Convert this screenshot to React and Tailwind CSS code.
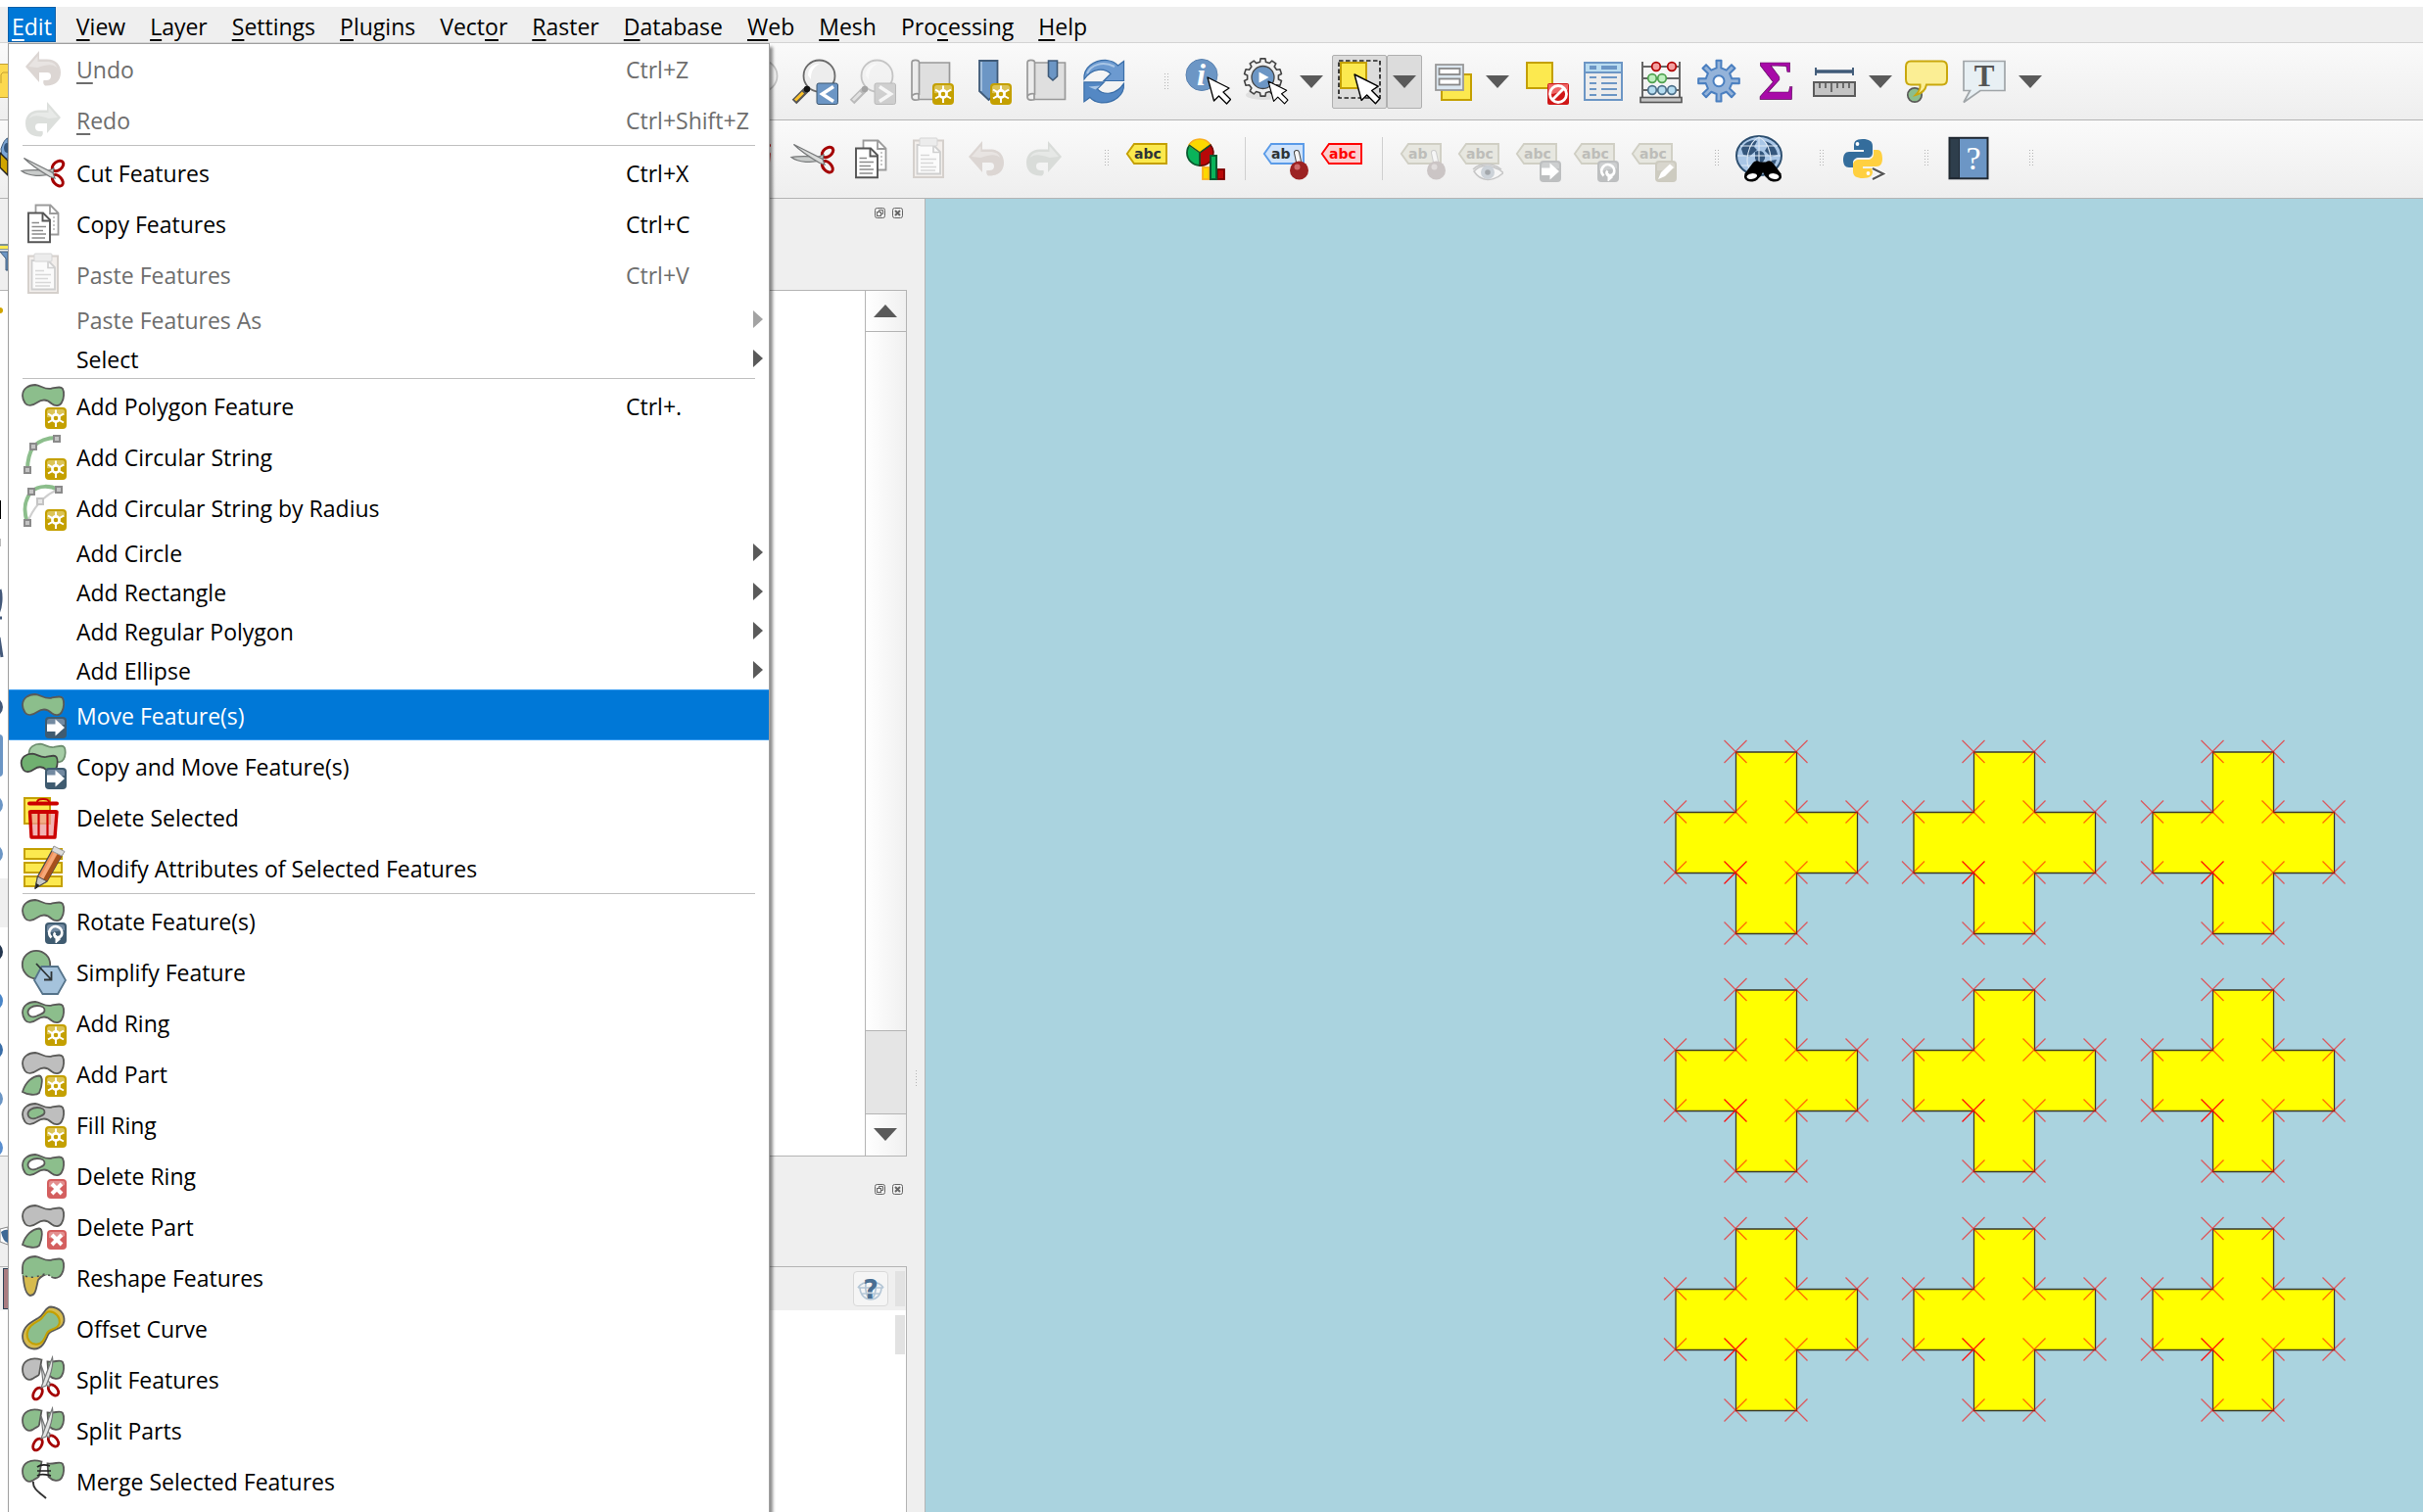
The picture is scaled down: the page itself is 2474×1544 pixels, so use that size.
import React from "react";

/* ---------- small drawing helpers ---------- */

const BLOB =
  "M3 14C3 7 9 3 16 3C22 3.5 25 8 32 6.8C38 5.6 42 4 44 7C45.6 10 45.6 17 43 21C41 25 36 25 32.5 22C28 17.5 23 17.5 18 21C13 24.5 8 25 5.5 21.5C3.5 18.5 3 17 3 14Z";

function Svg({ children, className = "" }) {
  return (
    <svg viewBox="0 0 48 48" className={"size-12 shrink-0 " + className} fill="none" aria-hidden="true">
      {children}
    </svg>
  );
}

function gearPath(cx, cy, outer, inner, teeth, width) {
  const points = [];
  for (let i = 0; i < teeth; i++) {
    const a = (i * 2 * Math.PI) / teeth - Math.PI / 2;
    const w = (width * Math.PI) / teeth;
    [[inner, -w * 1.25], [outer, -w * 0.85], [outer, w * 0.85], [inner, w * 1.25]].forEach(([r, d]) => {
      points.push(`${(cx + r * Math.cos(a + d)).toFixed(2)} ${(cy + r * Math.sin(a + d)).toFixed(2)}`);
    });
  }
  return "M" + points.join("L") + "Z";
}

function Blob({ fill = "#8cbe8c" }) {
  return <path d={BLOB} fill={fill} stroke="#5a5a58" strokeWidth="1.8" />;
}

function NewBadge() {
  return (
    <g>
      <rect x="26" y="26" width="22" height="22" rx="4" fill="#c4a000" />
      <path d="M28 36V30.500a2.500 2.500 0 0 1 2.500-2.500h13a2.500 2.500 0 0 1 2.500 2.500V34C40 34 34 37 28 36Z" fill="#dcc456" />
      <g stroke="#fff" strokeWidth="2">
        <path d="M37 28.500V33M37 41V46M29 32.500L33.800 35.400M40.200 38.800L45 41.500M29 41.500L33.800 38.800M40.200 35.400L45 32.500" />
        <circle cx="37" cy="37" r="3.600" strokeWidth="2.600" fill="#c4a000" />
      </g>
    </g>
  );
}

function ToolBadge({ children, base = "#3f5b70", shine = "#7289a0" }) {
  return (
    <g>
      <rect x="26" y="26" width="22" height="22" rx="4" fill={base} />
      <path d="M28 36V30.500a2.500 2.500 0 0 1 2.500-2.500h13a2.500 2.500 0 0 1 2.500 2.500V34C40 34 34 37 28 36Z" fill={shine} />
      {children}
    </g>
  );
}

function ArrowBadge({ base, shine }) {
  return (
    <ToolBadge base={base} shine={shine}>
      <path d="M28 33.500H36.500V28.500L46 37L36.500 45.500V41H28Z" fill="#fff" />
    </ToolBadge>
  );
}

function RotateBadge({ base, shine }) {
  return (
    <ToolBadge base={base} shine={shine}>
      <path d="M32.500 41.500A6.500 6.500 0 1 1 43 38.500C42 41 40 41.500 38 41.500C35.500 41 34.500 38 36.500 36.500" stroke="#fff" strokeWidth="2.800" />
      <path d="M37 39L41.500 43L37 47Z" fill="#fff" stroke="#fff" />
    </ToolBadge>
  );
}

function DeleteBadge() {
  return (
    <g>
      <rect x="28" y="28" width="20" height="20" rx="4" fill="#d45f5f" />
      <path d="M30 36V32a2 2 0 0 1 2-2h12a2 2 0 0 1 2 2V34Q38 38 30 36Z" fill="#e39090" />
      <path d="M33 33L43 43M43 33L33 43" stroke="#fff" strokeWidth="4" />
    </g>
  );
}

function Pointer({ x = 0, y = 0, scale = 1 }) {
  return (
    <path
      transform={`translate(${x} ${y}) scale(${scale})`}
      d="M0 0L6.500 24L11.500 19L19.500 27L23.500 22.500L16 15L22 11Z"
      fill="#fff"
      stroke="#000"
      strokeWidth="1.300"
      strokeLinejoin="round"
    />
  );
}

/* ---------- icons ---------- */

const UndoIcon = ({ mirror, fill = "#dcd6d3" }) => (
  <Svg>
    <g transform={mirror ? "translate(48 0) scale(-1 1)" : undefined}>
      <path d="M6 22L20 6V14.500H28C37 14.500 42 20 42 28C42 37 36 42 26 41.500C24 40 24 38 24.500 36C30 36.500 32 35 32 31.500C32 29 30.500 28 28 28H20V38Z" fill={fill} />
      <path d="M9 22L18.500 11V17H28C33 17 37 19 38 23C33 19 28 20 18.500 23Z" fill="#fff" opacity=".35" />
    </g>
  </Svg>
);

const Scissors = () => (
  <g>
    <g fill="none" stroke="#a40000" strokeWidth="3">
      <ellipse cx="39" cy="17.500" rx="6.500" ry="4.200" transform="rotate(-38 39 17.500)" />
      <ellipse cx="38.800" cy="32.200" rx="6.800" ry="4.200" transform="rotate(48 38.800 32.200)" />
    </g>
    <path d="M2 22.500C10 21 24 22 30 22L35 20L34 25C24 29 9 28 2 22.500Z" fill="#c9cccb" stroke="#77797a" strokeWidth="1.200" />
    <path d="M4.500 9.500L34 24.500L36 30L31 28.500C20 22 9 14 4.500 9.500Z" fill="#d9dbda" stroke="#77797a" strokeWidth="1.200" />
  </g>
);

const CutIcon = () => <Svg><Scissors /></Svg>;

const CopyIcon = () => (
  <Svg>
    <path d="M16.500 5.500H31.500L39.500 13.500V35.500H16.500Z" fill="#fff" stroke="#9b9b9b" strokeWidth="1.800" />
    <path d="M31 6V14H39" stroke="#9b9b9b" strokeWidth="1.800" />
    <path d="M34 18H36M34 22H36M34 26H36M34 30H36" stroke="#b5b5b5" strokeWidth="1.500" />
    <path d="M9 13.500H24L31 20.500V43.200H9Z" fill="#fff" stroke="#555" strokeWidth="1.900" />
    <path d="M23.500 14V21.500H31" stroke="#555" strokeWidth="1.900" />
    <path d="M12.500 23.500H20M12.500 27.500H27M12.500 31.500H24M12.500 35H27M12.500 39H26" stroke="#8a8a8a" strokeWidth="1.600" />
  </Svg>
);

const PasteIcon = () => (
  <Svg>
    <rect x="9" y="5.500" width="30" height="37.500" fill="#f3efec" stroke="#d5d0cc" strokeWidth="2" />
    <path d="M12.500 10H29L36 17V39.500H12.500Z" fill="#fbfbfb" stroke="#cfcfcf" strokeWidth="1.800" />
    <path d="M29 10.500V17.500H35.500" stroke="#cfcfcf" strokeWidth="1.600" />
    <rect x="15" y="3" width="18" height="8" rx="1" fill="#ececec" stroke="#d5d5d5" />
    <path d="M16 20.500H25M16 24.500H32M16 28.500H29M16 32.500H32M16 36H31" stroke="#d8d8d8" strokeWidth="1.600" />
  </Svg>
);

const AddPolygonIcon = () => <Svg><Blob /><NewBadge /></Svg>;

const Node = ({ x, y, light }) => (
  <rect x={x - 3} y={y - 3} width="6" height="6" fill={light ? "#e6e6e6" : "#c4c4c4"} stroke={light ? "#c4c4c4" : "#8a8a8a"} strokeWidth="2" />
);

const CircularStringIcon = () => (
  <Svg>
    <path d="M8 38C8 30 9 22 14 14C20 8 29 5 38 5" stroke="#8cbe8c" strokeWidth="4" />
    <Node x={8} y={38} /><Node x={14} y={14} /><Node x={38} y={6} /><NewBadge />
  </Svg>
);

const CircularRadiusIcon = () => (
  <Svg>
    <path d="M8 40C4 28 4 18 12 8C20 1 32 2 39 6" stroke="#8cbe8c" strokeWidth="4" />
    <path d="M8 40C13 26 24 12 39 6" stroke="#cfcfcf" strokeWidth="2" />
    <Node x={8} y={40} /><Node x={12} y={8} /><Node x={21} y={18} light /><Node x={40} y={6} /><NewBadge />
  </Svg>
);

const MoveIcon = () => <Svg><Blob /><ArrowBadge /></Svg>;

const CopyMoveIcon = () => (
  <Svg>
    <g transform="translate(7 -1) scale(.88)"><path d={BLOB} fill="#a5cda5" stroke="#6f8f70" strokeWidth="2" /></g>
    <g transform="translate(-1 9) scale(.88)"><path d={BLOB} fill="#70b070" stroke="#444" strokeWidth="2" /></g>
    <ArrowBadge />
  </Svg>
);

const TrashIcon = () => (
  <Svg>
    <rect x="5" y="5" width="26" height="26" fill="#fce94f" stroke="#c4a000" strokeWidth="2" />
    <path d="M10.500 19H38L36 45H12Z" fill="#e99" fillOpacity=".75" stroke="#cc0000" strokeWidth="3.400" strokeLinejoin="round" />
    <path d="M19.500 20V44M28.500 20V44" stroke="#cc0000" strokeWidth="2.200" />
    <path d="M10 10.500H38" stroke="#cc0000" strokeWidth="4" strokeLinecap="round" />
    <path d="M18 9C18 5 30 5 30 9" stroke="#cc0000" strokeWidth="2" />
    <path d="M11 19H37.500" stroke="#cc0000" strokeWidth="4" />
  </Svg>
);

const ModifyIcon = () => (
  <Svg>
    {[5, 19, 33].map((y) => (
      <rect key={y} x="5" y={y} width="38" height="10" fill="#fce94f" stroke="#c4a000" strokeWidth="2" />
    ))}
    <path d="M16 45L18.500 33L35 3L45 8L28 38Z" fill="#f0905a" stroke="#4a4a4a" strokeWidth="1.300" />
    <path d="M28 38L45 8L41 6L24 36Z" fill="#a5501c" />
    <path d="M24 36L40 6L37 4.500L21 34.500Z" fill="#f6a878" />
    <path d="M33 7L35 2L46 7.500L43 12Z" fill="#dcdcdc" stroke="#9a9a9a" />
    <path d="M16 45L18.500 33L28 38Z" fill="#c9c9c9" stroke="#4a4a4a" />
    <path d="M16 46L17 40L20.500 42Z" fill="#222" />
  </Svg>
);

const RotateIcon = () => <Svg><Blob /><RotateBadge /></Svg>;

const SimplifyIcon = () => (
  <Svg>
    <circle cx="17" cy="17" r="14.200" fill="#8cbe8c" stroke="#5a5a58" strokeWidth="1.800" />
    <path d="M15 33L22.500 19H39L47 33L39 47H23.500Z" fill="#a5c3dc" stroke="#55738a" strokeWidth="1.800" />
    <path d="M17 16L32 32M32.500 24V32.500H25" stroke="#2e3436" strokeWidth="1.800" />
  </Svg>
);

const Ring = ({ outer = "#8cbe8c", inner = "#fff" }) => (
  <g>
    <Blob fill={outer} />
    <path d="M8.500 14C8 10 13 7 18 7C23 7 26 9 25.500 12C25 15.500 21 15.500 17.500 17.500C13.500 19.500 9 18 8.500 14Z" fill={inner} stroke="#5a5a58" strokeWidth="1.800" />
  </g>
);

const PartLeaf = () => (
  <path d="M3 43C6 33 13 27 20 26.500C24 27 23.500 36 20 44C17 47 8 46 3 43Z" fill="#8cbe8c" stroke="#5a5a58" strokeWidth="1.800" />
);

const AddRingIcon = () => <Svg><Ring /><NewBadge /></Svg>;
const AddPartIcon = () => <Svg><Blob fill="#bebebe" /><PartLeaf /><NewBadge /></Svg>;
const FillRingIcon = () => <Svg><Ring outer="#bebebe" inner="#8cbe8c" /><NewBadge /></Svg>;
const DeleteRingIcon = () => <Svg><Ring /><DeleteBadge /></Svg>;
const DeletePartIcon = () => <Svg><Blob fill="#bebebe" /><PartLeaf /><DeleteBadge /></Svg>;

const ReshapeIcon = () => (
  <Svg>
    <path d="M3.500 20C4 30 6 42 11 43C17 43 17 34 19 27C22 23 26 21 30 21L20 16Z" fill="#d7bb4e" stroke="#5a5a58" strokeWidth="1.800" />
    <path d="M3 20V14C3 7 9 3 16 3C22 3.500 25 8 32 6.800C38 5.600 42 4 44 7C45.600 10 45.600 17 43 21C41 25 36 26 32.500 24C28 20 22 22 17 24C11 25 6 24 3 22Z" fill="#8cbe8c" />
    <path d="M3 21V14C3 7 9 3 16 3C22 3.500 25 8 32 6.800C38 5.600 42 4 44 7C45.600 10 45.600 17 43 21C41 25 36 26 32.500 24" stroke="#5a5a58" strokeWidth="1.800" />
    <path d="M6 23C12 26 20 23 24 21.500C28 20 30 22 33 24.500" stroke="#4a4a4a" strokeWidth="1.600" strokeDasharray="2 4" />
  </Svg>
);

const OFFSET = "M32 2.500C40 3 46 9 45.500 17C44 27 33 24 29 31C26 38 23 45.500 15 45.500C8 45 3 40 3 32C4 22 12 18 19 14C25 11 26 2.500 32 2.500Z";
const OffsetIcon = () => (
  <Svg>
    <path d={OFFSET} fill="#d7bb4e" stroke="#5a5a58" strokeWidth="1.800" />
    <g transform="translate(5.300 5.300) scale(.78)"><path d={OFFSET} fill="#8cbe8c" stroke="#c4a000" strokeWidth="2.600" /></g>
  </Svg>
);

const Halves = ({ left = "#8cbe8c" }) => (
  <g stroke="#5a5a58" strokeWidth="1.800">
    <path d="M22.500 4.500C11 1 3 6 3 14C3 23 9 27 14 23.500C17 21 20 21 20 19Z" fill={left} />
    <path d="M28.500 6.500C36 7.500 42 3.500 44 7C45.600 10 45.600 17 43 21C40 25.500 34 24.500 29.500 20Z" fill="#8cbe8c" />
  </g>
);

const SplitScissors = () => (
  <g>
    <g fill="none" stroke="#a40000" strokeWidth="2.800">
      <ellipse cx="18.500" cy="39" rx="6.500" ry="4" transform="rotate(-58 18.500 39)" />
      <ellipse cx="34.500" cy="35.500" rx="6.500" ry="4" transform="rotate(48 34.500 35.500)" />
    </g>
    <path d="M22 10L24 28L30 32L31 28L27 24Z" fill="#d9dbda" stroke="#77797a" strokeWidth="1.200" />
    <path d="M33.500 2L22 33L27 31C31 22 35 10 33.500 2Z" fill="#e3e5e4" stroke="#77797a" strokeWidth="1.200" />
  </g>
);

const SplitFeaturesIcon = () => <Svg><Halves left="#bebebe" /><SplitScissors /></Svg>;
const SplitPartsIcon = () => <Svg><Halves /><SplitScissors /></Svg>;
const MergeIcon = () => (
  <Svg>
    <Halves />
    <path d="M18 10C22 7 28 8 31 9M18 14H32M18 19C22 16 28 18 32 19" stroke="#222" strokeWidth="1.700" />
    <path d="M14 25C13 33 22 37 27 42" stroke="#333" strokeWidth="1.900" />
  </Svg>
);

const ZoomIcon = ({ badge, faded }) => (
  <Svg className={faded ? "opacity-35 grayscale" : ""}>
    <circle cx="28.500" cy="18.500" r="16" fill="#ededed" stroke="#6b6b6b" strokeWidth="1.800" />
    <path d="M17 18C17 10 23 6 29 6C22 10 20 14 20 22Z" fill="#fff" />
    <path d="M15 33L3 45" stroke="#555" strokeWidth="6.500" />
    <path d="M12 35.500L4 43.500" stroke="#fcc22a" strokeWidth="3" />
    <circle cx="16" cy="32" r="3.200" fill="#111" />
    {badge && (
      <g>
        <rect x="26" y="26" width="21.500" height="21.500" rx="2" fill="#6c96c5" stroke="#3d566f" />
        <path d={badge === "<" ? "M43 29.500L31.500 37L43 44.500" : "M31 29.500L42.500 37L31 44.500"} stroke="#fff" strokeWidth="3.500" />
      </g>
    )}
  </Svg>
);

const Scroll = () => (
  <g fill="#dfdfdf" stroke="#999" strokeWidth="1.700">
    <path d="M12 5H43.500V42.500H12Z" />
    <path d="M5 40V5C5 1.500 12.500 1.500 12.500 5V37C8 36 5 38 5 40C5 44 10 43.500 12.500 42.500" fill="#ececec" />
  </g>
);

const NewViewIcon = () => <Svg><Scroll /><NewBadge /></Svg>;
const NewBookmarkIcon = () => (
  <Svg>
    <path d="M15 3H33.500V35L24.500 43L15 34Z" fill="#6c96c5" stroke="#3f5a78" strokeWidth="1.800" />
    <path d="M17 4V34" stroke="#b3cbe4" strokeWidth="1.500" />
    <NewBadge />
  </Svg>
);
const BookmarksIcon = () => (
  <Svg>
    <Scroll />
    <path d="M26.500 3H35.500V19L31 23L26.500 19Z" fill="#6c96c5" stroke="#3f5a78" strokeWidth="1.600" />
  </Svg>
);

const RefreshIcon = () => {
  const d = "M4 22C3 10 14 2 27 2.500C32 3 36 5 38.500 8L44.500 3.500V23.500H24L31 16.500C25 10 12 10 4 22Z";
  return (
    <Svg>
      <path d={d} fill="#6c9ad0" stroke="#3a6ea8" strokeWidth="1.200" />
      <path d="M7 16C11 7 23 3 35 9" stroke="#a9c6e6" strokeWidth="2" />
      <g transform="rotate(180 24.200 24.200)">
        <path d={d} fill="#5488c4" stroke="#3a6ea8" strokeWidth="1.200" />
        <path d="M40 19L28 20L33 16Z" fill="#a9c6e6" />
      </g>
    </Svg>
  );
};

const IdentifyIcon = () => (
  <Svg>
    <circle cx="18" cy="17.500" r="16" fill="#6c96c5" stroke="#5a82b0" />
    <text x="17.500" y="28" textAnchor="middle" className="font-['Liberation_Serif'] text-[32px] font-bold italic" fill="#fff">i</text>
    <Pointer x={24} y={20} />
  </Svg>
);

const ActionsIcon = () => (
  <Svg>
    <ellipse cx="22" cy="38" rx="18" ry="5" fill="#000" opacity=".08" />
    <path d={gearPath(21.500, 20, 19.300, 16, 10, 0.480)} fill="#f0f0f0" stroke="#444" strokeWidth="1.600" strokeLinejoin="round" />
    <circle cx="21.500" cy="20" r="11.500" fill="#6c96c5" stroke="#444" strokeWidth="1.300" />
    <path d="M17.500 14.500L27.500 20L17.500 25.500Z" fill="#fff" />
    <Pointer x={27} y={24} scale={0.85} />
  </Svg>
);

const SelectIcon = () => (
  <Svg>
    <rect x="3" y="3" width="42" height="38" stroke="#222" strokeWidth="1.700" strokeDasharray="4.500 2.500" />
    <rect x="5" y="5" width="26" height="26" fill="#fce94f" stroke="#c4a000" strokeWidth="2" />
    <Pointer x={19} y={17} scale={1.1} />
  </Svg>
);

const SelectFormIcon = () => (
  <Svg>
    <rect x="11" y="17" width="30" height="26" fill="#fce94f" stroke="#c4a000" strokeWidth="2" />
    <rect x="5" y="7" width="28" height="26" fill="#dbe6ef" stroke="#999" strokeWidth="1.800" />
    <rect x="8.500" y="11" width="21" height="6" fill="#fff" stroke="#888" strokeWidth="1.800" />
    <rect x="8.500" y="21.500" width="21" height="6" fill="#fff" stroke="#888" strokeWidth="1.800" />
  </Svg>
);

const DeselectIcon = () => (
  <Svg>
    <rect x="5" y="5" width="26" height="26" fill="#fce94f" stroke="#c4a000" strokeWidth="2" />
    <rect x="26" y="26" width="22" height="22" rx="2" fill="#d01818" />
    <path d="M27 27H47V33L27 38Z" fill="#e66" />
    <circle cx="37" cy="37" r="8.500" stroke="#fff" strokeWidth="2.800" />
    <path d="M31 43L43 31" stroke="#fff" strokeWidth="2.800" />
  </Svg>
);

const TableIcon = () => (
  <Svg>
    <rect x="5" y="5" width="38" height="38" fill="#ececec" stroke="#6c96c5" strokeWidth="2" />
    <rect x="6" y="6" width="36" height="8" fill="#badcf0" />
    <path d="M5 15H43" stroke="#6c96c5" strokeWidth="2" />
    <path d="M10 10H17M22 10H38" stroke="#6c96c5" strokeWidth="4" />
    <path d="M10 20H17M22 20H38M10 26H17M22 26H38M10 32H17M22 32H38M10 38H17M22 38H38" stroke="#6c96c5" strokeWidth="1.900" />
  </Svg>
);

const AbacusIcon = () => (
  <Svg>
    <path d="M5 4V41M43 4V41M5 9H43M5 21H43M5 33H43" stroke="#666" strokeWidth="2" />
    <rect x="3" y="40.500" width="42" height="5" fill="#c4c4c4" stroke="#555" strokeWidth="1.600" />
    {[[19, 9, "#f4a0a0", "#b00000"], [35, 9, "#f4a0a0", "#b00000"], [15, 21, "#bff0bf", "#4ea04e"], [25, 21, "#bff0bf", "#4ea04e"], [15, 33, "#b5dcf0", "#4c6f88"], [25, 33, "#b5dcf0", "#4c6f88"], [35, 33, "#b5dcf0", "#4c6f88"]].map(([x, y, f, s]) => (
      <circle key={x + "-" + y} cx={x} cy={y} r="4.300" fill={f} stroke={s} strokeWidth="1.700" />
    ))}
  </Svg>
);

const GearIcon = () => (
  <Svg>
    <path d={gearPath(24, 23.700, 21, 13.500, 8, 0.360)} fill="#94b3d9" stroke="#4a7fc0" strokeWidth="2" strokeLinejoin="round" />
    <circle cx="24" cy="23.700" r="5.500" fill="#fff" stroke="#4a7fc0" strokeWidth="2" />
  </Svg>
);

const SigmaIcon = () => (
  <Svg>
    <text x="24" y="43" textAnchor="middle" className="font-['Liberation_Serif'] text-[57px] font-bold" fill="#a80aa8" stroke="#5c0a5c" strokeWidth=".7">Σ</text>
  </Svg>
);

const MeasureIcon = () => (
  <Svg>
    <path d="M5 14H43" stroke="#3f5a78" strokeWidth="3.600" />
    <path d="M5 10V18M43 10V18" stroke="#3f5a78" strokeWidth="1.900" />
    <rect x="3" y="25" width="42" height="14" fill="#c4c4c4" stroke="#5c5c5c" strokeWidth="2" />
    <path d="M9 25V31M15 25V31M21 25V35M27 25V31M33 25V31M39 25V31" stroke="#5c5c5c" strokeWidth="1.700" />
  </Svg>
);

const MapTipIcon = () => (
  <Svg>
    <circle cx="12" cy="38" r="7.200" fill="#8cbe8c" stroke="#5a5a58" strokeWidth="1.700" />
    <path d="M8 3.500H40Q45 3.500 45 9V22Q45 27.500 40 27.500H24C23 33 19 36.500 13 38C16 35 18 31 17.500 27.500H8Q3 27.500 3 22V9Q3 3.500 8 3.500Z" fill="#fbee94" stroke="#c9a80e" strokeWidth="2" />
  </Svg>
);

const AnnotationIcon = () => (
  <Svg>
    <path d="M3 3.500H45V33.500H20L3 45.500L9.500 33.500H3Z" fill="#e8f0f4" stroke="#a0a5a8" strokeWidth="1.700" />
    <text x="24" y="28.500" textAnchor="middle" className="font-['Liberation_Serif'] text-[31px] font-bold" fill="#555">T</text>
  </Svg>
);

const TAG_STYLES = {
  yellow: { fill: "#fbe94e", stroke: "#c4a000", text: "#2e3436" },
  blue: { fill: "#cfe3fb", stroke: "#5a9be8", text: "#2e3436" },
  red: { fill: "#fbd0d0", stroke: "#ff0000", text: "#ff0000" },
  gray: { fill: "#e7e7e0", stroke: "#d0cfc4", text: "#bdbdb9" },
};

const TagIcon = ({ tone, word = "abc", children }) => {
  const s = TAG_STYLES[tone];
  return (
    <Svg>
      <path d="M2.800 19L10 9H43V29H10Z" fill={s.fill} stroke={s.stroke} strokeWidth="1.900" />
      <text x="10" y="24" className="font-['DejaVu_Sans'] text-[14px] font-bold" fill={s.text}>{word}</text>
      {children}
    </Svg>
  );
};

const Pin = ({ faded }) => (
  <g>
    <path d="M36 18L38 27" stroke={faded ? "#ccc" : "#444"} strokeWidth="6" strokeLinecap="round" />
    <path d="M36 18L38 27" stroke="#f6f6f6" strokeWidth="4" strokeLinecap="round" />
    <circle cx="38.500" cy="36" r="9.500" fill={faded ? "#cbc5c5" : "#9c2222"} />
    <circle cx="36.500" cy="32.500" r="3" fill={faded ? "#e0dcdc" : "#d06a6a"} />
  </g>
);

const Eye = () => (
  <g>
    <path d="M18 37C24 29.500 38 29.500 48 38.500C38 48 25 48 18 37Z" fill="#f6f6f6" stroke="#c6c6c6" strokeWidth="1.500" />
    <circle cx="32" cy="38" r="7" fill="#ccd2d8" />
    <circle cx="32" cy="38" r="2.800" fill="#a3a7ab" />
    <path d="M17 35C24 28 38 28 46 35" stroke="#c6c6c6" strokeWidth="1.500" />
  </g>
);

const DiagramIcon = () => (
  <Svg>
    <circle cx="18" cy="18" r="13" fill="#0ab45a" stroke="#0a5a30" strokeWidth="1.800" />
    <path d="M18 18L7 10A13 13 0 0 1 29 10Z" fill="#fcd800" stroke="#fbb020" strokeWidth="1.500" />
    <path d="M18 18L29 10A13 13 0 0 1 18 31Z" fill="#b80808" stroke="#6a0000" strokeWidth="1.500" />
    <path d="M18 31V18L7 10M18 18L29 10" stroke="#0a5a30" strokeWidth="1.500" />
    <rect x="21" y="33" width="6.500" height="12" fill="#fcd800" stroke="#fbb020" strokeWidth="1.800" />
    <rect x="36" y="35" width="7" height="10" fill="#b80808" stroke="#7a0000" strokeWidth="1.800" />
    <rect x="29" y="21" width="6" height="24" fill="#0ab45a" stroke="#0a5a30" strokeWidth="2" />
  </Svg>
);

const MetaSearchIcon = () => (
  <Svg>
    <ellipse cx="24" cy="21" rx="23" ry="20" fill="#a9c6e6" stroke="#2d4f70" strokeWidth="2" />
    <path d="M6 14C10 6 18 4 22 6L19 12L22 15L14 22L8 20ZM30 6C38 8 42 14 43 20L36 22L30 16L33 11ZM20 17C26 14 31 18 30 24C28 28 25 30 23 30L20 24ZM36 26L42 25L40 30Z" fill="#34567c" />
    <path d="M2 21H46M5 11H43M24 2V28M24 2C12 8 10 28 14 34M24 2C36 8 38 26 34 34M6 31H18" stroke="#dfeaf5" strokeWidth="1.100" />
    <path d="M9 40L18 28Q21 25 25 27.500H31Q35 25 38 28L47 40L39 46L31 43L28 38L25 43L16 46Z" fill="#000" />
    <ellipse cx="16.800" cy="42" rx="6.600" ry="4.200" fill="#fff" stroke="#000" strokeWidth="2.600" transform="rotate(-8 16.800 42)" />
    <ellipse cx="39.200" cy="42" rx="6.600" ry="4.200" fill="#fff" stroke="#000" strokeWidth="2.600" transform="rotate(8 39.200 42)" />
  </Svg>
);

const PythonIcon = () => (
  <Svg>
    <path d="M23 4C15 4 14 7 14 11V15H24V17H9C5 17 3 20 3 25C3 30 5 33 9 33H13V28C13 25 16 23 19 23H28C31 23 33 21 33 18V11C33 6 29 4 23 4Z" fill="#346d9c" />
    <path d="M23 44C31 44 33 41 33 37V34H23V32H37C41 32 43 29 43 24C43 18 41 15 38 15H34V19C34 23 31 25 28 25H19C16 25 13 27 13 30V37C13 42 17 44 23 44Z" fill="#ffd040" />
    <circle cx="17.500" cy="9" r="1.900" fill="#fff" />
    <circle cx="28.500" cy="39" r="1.900" fill="#fff" />
    <path d="M33 34L44 39.500L33 45" stroke="#fff" strokeWidth="4.500" />
    <path d="M33 34L44 39.500L33 45" stroke="#555" strokeWidth="2.200" />
  </Svg>
);

const HelpBookIcon = () => (
  <Svg>
    <rect x="4.500" y="2.800" width="39" height="41.500" fill="#6c96c5" stroke="#222a33" strokeWidth="2" />
    <rect x="5" y="3.500" width="9.500" height="40" fill="#2e3e4c" stroke="#222a33" />
    <text x="29" y="34.500" textAnchor="middle" className="font-['Liberation_Serif'] text-[34px]" fill="#fff">?</text>
  </Svg>
);

/* ---------- shared widgets ---------- */

function Grip({ single }) {
  return (
    <svg width="5" height="17" className="shrink-0" aria-hidden="true">
      {[0, 3, 6, 9, 12, 15].map((y) => (
        <g key={y} fill="#b4b4b4">
          <rect x="0" y={y} width="1" height="1" />
          {!single && <rect x="3" y={y} width="1" height="1" />}
        </g>
      ))}
    </svg>
  );
}

function Triangle({ up }) {
  return (
    <svg viewBox="0 0 24 13" className="h-[13px] w-6 shrink-0" aria-hidden="true">
      <path d={up ? "M0 13L12 0L24 13Z" : "M0 0H24L12 13Z"} fill="#5a5a5a" />
    </svg>
  );
}

function Tool({ label, icon: Icon, ...rest }) {
  return (
    <button type="button" aria-label={label} className="shrink-0">
      <Icon {...rest} />
    </button>
  );
}

function TagTool({ label, tone, word, children }) {
  return (
    <button type="button" aria-label={label} className="shrink-0">
      <TagIcon tone={tone} word={word}>{children}</TagIcon>
    </button>
  );
}

function Drop({ label, className = "" }) {
  return (
    <button type="button" aria-label={label} className={"shrink-0 " + className}>
      <Triangle />
    </button>
  );
}

/* ---------- menu bar ---------- */

const MENUS = [
  ["", "E", "dit"], ["", "V", "iew"], ["", "L", "ayer"], ["", "S", "ettings"], ["", "P", "lugins"], ["Vect", "o", "r"],
  ["", "R", "aster"], ["", "D", "atabase"], ["", "W", "eb"], ["", "M", "esh"], ["Pro", "c", "essing"], ["", "H", "elp"],
];

function MenuBar() {
  return (
    <nav className="flex h-11 shrink-0 gap-[17px] border-t-[7px] border-b border-t-white border-b-[#d4d4d4] bg-[#efefef] pl-2">
      {MENUS.map(([before, key, after], i) => (
        <button
          key={after}
          type="button"
          className={"px-1 pt-[2px] leading-9 " + (i === 0 ? "bg-[#0078d7] text-white outline-1 -outline-offset-1 outline-[#1060a8]" : "")}
        >
          {before}<span className="underline underline-offset-4">{key}</span>{after}
        </button>
      ))}
    </nav>
  );
}

/* ---------- edit menu ---------- */

const EDIT_ITEMS = [
  { text: "Undo", mnemonic: true, keys: "Ctrl+Z", icon: UndoIcon, off: true },
  { text: "Redo", mnemonic: true, keys: "Ctrl+Shift+Z", icon: () => <UndoIcon mirror fill="#dcdfdc" />, off: true },
  null,
  { text: "Cut Features", keys: "Ctrl+X", icon: CutIcon },
  { text: "Copy Features", keys: "Ctrl+C", icon: CopyIcon },
  { text: "Paste Features", keys: "Ctrl+V", icon: PasteIcon, off: true },
  { text: "Paste Features As", sub: true, off: true },
  { text: "Select", sub: true },
  null,
  { text: "Add Polygon Feature", keys: "Ctrl+.", icon: AddPolygonIcon },
  { text: "Add Circular String", icon: CircularStringIcon },
  { text: "Add Circular String by Radius", icon: CircularRadiusIcon },
  { text: "Add Circle", sub: true },
  { text: "Add Rectangle", sub: true },
  { text: "Add Regular Polygon", sub: true },
  { text: "Add Ellipse", sub: true },
  { text: "Move Feature(s)", icon: MoveIcon, active: true },
  { text: "Copy and Move Feature(s)", icon: CopyMoveIcon },
  { text: "Delete Selected", icon: TrashIcon },
  { text: "Modify Attributes of Selected Features", icon: ModifyIcon },
  null,
  { text: "Rotate Feature(s)", icon: RotateIcon },
  { text: "Simplify Feature", icon: SimplifyIcon },
  { text: "Add Ring", icon: AddRingIcon },
  { text: "Add Part", icon: AddPartIcon },
  { text: "Fill Ring", icon: FillRingIcon },
  { text: "Delete Ring", icon: DeleteRingIcon },
  { text: "Delete Part", icon: DeletePartIcon },
  { text: "Reshape Features", icon: ReshapeIcon },
  { text: "Offset Curve", icon: OffsetIcon },
  { text: "Split Features", icon: SplitFeaturesIcon },
  { text: "Split Parts", icon: SplitPartsIcon },
  { text: "Merge Selected Features", icon: MergeIcon },
];

function MenuItem({ item }) {
  const Icon = item.icon;
  const tone = item.active
    ? "bg-[#0078d7] text-white border-y border-[#3a9df0]"
    : item.off
      ? "text-[#6d6d6d]"
      : "text-black";
  return (
    <li>
      <button type="button" className={"flex w-full items-center pl-[11px] text-left " + (Icon ? "h-[52px] " : "h-10 ") + tone}>
        <span className="mr-[10px] w-12 shrink-0">{Icon && <Icon />}</span>
        <span className="flex-1 pt-[3px] whitespace-nowrap">
          {item.mnemonic ? <><span className="underline underline-offset-4">{item.text[0]}</span>{item.text.slice(1)}</> : item.text}
        </span>
        {item.keys && <span className="w-[146px] shrink-0 pt-[3px] whitespace-nowrap">{item.keys}</span>}
        {item.sub && (
          <svg viewBox="0 0 10 18" className="mr-[6px] h-[18px] w-[10px]" aria-hidden="true">
            <path d="M0 0L10 9L0 18Z" fill={item.off ? "#a3a3a3" : "#5a5a5a"} />
          </svg>
        )}
      </button>
    </li>
  );
}

function EditMenu() {
  return (
    <ul className="absolute top-11 bottom-0 left-2 z-10 w-[778px] overflow-hidden border-x border-[#a0a0a0] bg-white shadow-[3px_4px_3px_rgba(0,0,0,0.45),inset_0_1px_0_#a0a0a0]">
      {EDIT_ITEMS.map((item, i) =>
        item ? <MenuItem key={item.text} item={item} /> : <li key={i} className="mx-[14px] h-[2px] border-t border-[#c0c0c0]" />
      )}
    </ul>
  );
}

/* ---------- toolbars ---------- */

const BAR = "flex shrink-0 items-center gap-[11px] border-b border-[#b4b4b4] bg-linear-to-b from-[#fafafa] to-[#eeeeee]";

const GripSlot = () => <div className="flex w-9 shrink-0 justify-end pr-1"><Grip /></div>;
const Divider = () => <div className="mx-[5px] h-11 w-px shrink-0 bg-[#d0d0d0]" />;

function AttributesBar() {
  return (
    <div className={BAR + " h-[79px]"}>
      <svg width="8" height="48" className="mr-[730px] shrink-0" aria-hidden="true">
        <path d="M-1 6.500H9V40.500H-1Z" fill="#fcd94f" stroke="#c4a030" />
        <path d="M1 26V17L3 15H8" fill="none" stroke="#c4a030" />
      </svg>
      <Tool label="Zoom to layer" icon={ZoomIcon} faded />
      <Tool label="Zoom last" icon={ZoomIcon} badge="<" />
      <Tool label="Zoom next" icon={ZoomIcon} badge=">" faded />
      <Tool label="New map view" icon={NewViewIcon} />
      <Tool label="New bookmark" icon={NewBookmarkIcon} />
      <Tool label="Show bookmarks" icon={BookmarksIcon} />
      <Tool label="Refresh" icon={RefreshIcon} />
      <GripSlot />
      <Tool label="Identify features" icon={IdentifyIcon} />
      <Tool label="Run action" icon={ActionsIcon} />
      <Drop label="Action options" />
      <div className="-mx-[2px] flex h-[55px] shrink-0">
        <button type="button" aria-label="Select features" className="w-14 rounded-xs border border-[#b0b0b0] bg-[#dcdcdc] pl-[3px]"><SelectIcon /></button>
        <button type="button" aria-label="Select options" className="flex w-9 items-center justify-center rounded-xs border border-[#b0b0b0] bg-[#dcdcdc]"><Triangle /></button>
      </div>
      <Tool label="Select by form" icon={SelectFormIcon} />
      <Drop label="Form options" className="-ml-[3px] mr-[2px]" />
      <Tool label="Deselect features" icon={DeselectIcon} />
      <Tool label="Open attribute table" icon={TableIcon} />
      <Tool label="Field calculator" icon={AbacusIcon} />
      <Tool label="Toolbox" icon={GearIcon} />
      <Tool label="Statistics" icon={SigmaIcon} />
      <Tool label="Measure line" icon={MeasureIcon} />
      <Drop label="Measure options" />
      <Tool label="Map tips" icon={MapTipIcon} />
      <Tool label="Text annotation" icon={AnnotationIcon} />
      <Drop label="Annotation options" />
    </div>
  );
}

function LabelBar() {
  return (
    <div className={BAR + " h-[80px] pb-[2px]"}>
      <svg width="8" height="48" className="mr-[728px] shrink-0" aria-hidden="true">
        <path d="M1 14C3 8 5 4 8 3V24H2Z" fill="#7ba6d6" stroke="#3f5a78" />
        <ellipse cx="7" cy="13" rx="3" ry="5" fill="#34567c" />
        <path d="M0 18L8 26V41L0 33Z" fill="#d0a500" stroke="#222" strokeWidth="1.500" />
      </svg>
      <Tool label="Delete selected" icon={TrashIcon} />
      <Tool label="Cut features" icon={CutIcon} />
      <Tool label="Copy features" icon={CopyIcon} />
      <Tool label="Paste features" icon={PasteIcon} />
      <Tool label="Undo" icon={UndoIcon} />
      <Tool label="Redo" icon={UndoIcon} mirror fill="#d9dcd9" />
      <GripSlot />
      <Tool label="Layer labeling" icon={TagIcon} tone="yellow" />
      <Tool label="Layer diagram" icon={DiagramIcon} />
      <Divider />
      <TagTool label="Pinned labels" tone="blue" word="ab"><Pin /></TagTool>
      <Tool label="Unplaced labels" icon={TagIcon} tone="red" />
      <Divider />
      <TagTool label="Pin labels" tone="gray" word="ab"><Pin faded /></TagTool>
      <TagTool label="Show labels" tone="gray"><Eye /></TagTool>
      <TagTool label="Move label" tone="gray"><ArrowBadge base="#bdbfc0" shine="#cdcfd0" /></TagTool>
      <TagTool label="Rotate label" tone="gray"><RotateBadge base="#bdbfc0" shine="#cdcfd0" /></TagTool>
      <TagTool label="Change label" tone="gray">
        <ToolBadge base="#cdcbc0" shine="#d8d6cd"><path d="M29 45L32 38L41 29.500L45 33L36 42Z" fill="#fff" /></ToolBadge>
      </TagTool>
      <div className="ml-7 flex shrink-0 items-center gap-[38px]">
        <div className="flex items-center gap-4"><Grip /><Tool label="MetaSearch" icon={MetaSearchIcon} /></div>
        <div className="flex items-center gap-4"><Grip /><Tool label="Python console" icon={PythonIcon} /></div>
        <div className="flex items-center gap-4"><Grip /><Tool label="Help contents" icon={HelpBookIcon} /></div>
        <Grip />
      </div>
    </div>
  );
}

/* ---------- docked panels ---------- */

function DockButtons() {
  return (
    <div className="flex justify-end gap-[7px] pr-1">
      <button type="button" aria-label="Float panel">
        <svg viewBox="0 0 11 11" className="size-[11px]" fill="none" stroke="#666">
          <rect x=".5" y=".5" width="10" height="10" rx="2" />
          <rect x="2.500" y="4.500" width="4" height="4" />
          <path d="M4.500 4V2.500H8.500V6.500H7" />
        </svg>
      </button>
      <button type="button" aria-label="Close panel">
        <svg viewBox="0 0 11 11" className="size-[11px]" fill="none" stroke="#666">
          <rect x=".5" y=".5" width="10" height="10" rx="2" />
          <path d="M3 3L8 8M8 3L3 8" strokeWidth="2" />
        </svg>
      </button>
    </div>
  );
}

/* Icons of the browser tree, of which only the right edge shows beside the menu. */
function TreeEdge() {
  return (
    <svg width="8" height="884" className="shrink-0" aria-hidden="true">
      <circle cx="0" cy="20" r="3" fill="#d0a500" />
      <rect x="0" y="214" width="1" height="19" fill="#000" />
      <rect x="0" y="253" width="1" height="8" fill="#bbb" />
      <g fill="none" stroke="#44597a" strokeWidth="3">
        <path d="M0 305C2 312 1 324 -2 329M0 334H2" />
        <path d="M-1 354L2 374" />
      </g>
      <circle cx="-7" cy="425" r="10" fill="#44597a" />
      <rect x="-10" y="453" width="13" height="43" rx="4" fill="#6c96c5" />
      <rect x="0" y="600" width="8" height="50" fill="#efefef" />
      {[[525, "#6c96c5"], [575, "#6c96c5"], [675, "#24364f"], [725, "#4a86c8"], [775, "#3a6ea8"], [825, "#6c96c5"], [875, "#5a8fd0"]].map(([y, c]) => (
        <g key={y}>
          <circle cx="-7" cy={y} r="10" fill={c} />
          <circle cx="-5" cy={y} r="5" fill="#cfe0f2" opacity=".6" />
        </g>
      ))}
    </svg>
  );
}

function Panels() {
  return (
    <aside className="flex w-[945px] shrink-0 border-r border-[#b4b4b4] bg-[#efefef]">
      <div className="flex w-[926px] flex-col">
        <div className="flex h-[93px] shrink-0 flex-col pt-[9px]">
          <DockButtons />
          <svg width="8" height="32" className="mt-[26px]" aria-hidden="true">
            <rect width="8" height="6" fill="#7f9293" />
            <rect y="2" width="8" height="3" fill="#fce94f" />
            <path d="M0 8L6 15V27H8V8Z" fill="#6c96c5" stroke="#3f5a78" />
          </svg>
        </div>
        <div className="flex h-[885px] shrink-0 justify-between border-y border-r border-[#b4b4b4] bg-white">
          <TreeEdge />
          <div className="flex w-[42px] flex-col border-l border-[#b4b4b4] bg-linear-to-r from-white to-[#f0f0f0]">
            <button type="button" aria-label="Scroll up" className="flex h-[42px] items-center justify-center border-b border-[#b4b4b4] pr-px"><Triangle up /></button>
            <div className="flex-1" />
            <div className="h-[86px] border-y border-[#b4b4b4] bg-[#e5e5e5]" />
            <button type="button" aria-label="Scroll down" className="flex h-[42px] items-center justify-center pr-[2px] pb-[2px]"><Triangle /></button>
          </div>
        </div>
        <div className="flex h-[112px] shrink-0 flex-col pt-7">
          <DockButtons />
          <svg width="8" height="20" className="mt-8" aria-hidden="true">
            <path d="M0 3L8 1V19L0 16Z" fill="#fff" stroke="#888" />
            <path d="M1 6Q5 3 8 4V17Q3 16 1 6Z" fill="#3f6a96" />
          </svg>
        </div>
        <div className="flex flex-1 flex-col border-t border-r border-[#b4b4b4] bg-white">
          <div className="flex h-11 items-center justify-between bg-[#efefef] pr-[1px]">
            <svg width="8" height="43" aria-hidden="true">
              <rect x="3.500" y=".5" width="8" height="41" fill="#a97c80" stroke="#2d4256" />
            </svg>
            <div className="flex">
              <button type="button" aria-label="Layer help" className="mr-[7px] size-9 rounded-sm border border-[#d9d9d9] bg-[#f5f5f5] p-[2px]">
                <svg viewBox="0 0 30 30" className="overflow-visible" fill="none" aria-hidden="true">
                  <path d="M2 14C7 6 23 6 28 14M4 14C5 30 25 30 26 14M2 14H28M10 9C9 17 11 24 15 26M20 9C21 17 19 24 15 26M5 20H25" stroke="#b4c6d6" strokeWidth="1.700" />
                  <text x="15" y="25" textAnchor="middle" className="font-['DejaVu_Sans'] text-[27px] leading-none font-bold" fill="#4a6f92">?</text>
                </svg>
              </button>
              <div className="w-[10px] bg-[#e2e2e2]" />
            </div>
          </div>
          <div className="mt-[5px] mr-[1px] h-10 w-[10px] self-end bg-[#e2e2e2]" />
        </div>
      </div>
      <div className="flex flex-1 items-center justify-center pb-1 pl-1"><div className="mt-[460px]"><Grip single /></div></div>
    </aside>
  );
}

/* ---------- map canvas ---------- */

const CROSS = [[61.5, 0], [123.5, 0], [123.5, 61.5], [185.5, 61.5], [185.5, 123.5], [123.5, 123.5], [123.5, 185.5], [61.5, 185.5], [61.5, 123.5], [0, 123.5], [0, 61.5], [61.5, 61.5]];
const COLUMNS = [766, 1009, 1253];
const ROWS = [565, 808, 1052];

function MapCanvas() {
  return (
    <main className="relative min-w-0 flex-1 overflow-hidden bg-[#aad3df]">
      <svg className="absolute inset-0 size-full" role="img" aria-label="Map canvas">
        {ROWS.map((y) =>
          COLUMNS.map((x) => (
            <g key={x + "-" + y} transform={`translate(${x} ${y})`}>
              <polygon points={CROSS.join(" ")} fill="#ffff00" stroke="#3a3a2c" strokeWidth="1.300" />
              {CROSS.map(([cx, cy], i) => (
                <path key={i} d={`M${cx - 12} ${cy - 12}l23 23m0 -23l-23 23`} stroke="#ff0000" strokeOpacity={i === 8 ? 0.95 : 0.58} strokeWidth="1.300" />
              ))}
            </g>
          ))
        )}
      </svg>
    </main>
  );
}

export default function App() {
  return (
    <div className="relative flex h-screen w-full flex-col overflow-hidden bg-white font-['Open_Sans','Noto_Sans',sans-serif] text-[23px] text-black">
      <MenuBar />
      <AttributesBar />
      <LabelBar />
      <div className="flex min-h-0 flex-1">
        <Panels />
        <MapCanvas />
      </div>
      <EditMenu />
    </div>
  );
}
